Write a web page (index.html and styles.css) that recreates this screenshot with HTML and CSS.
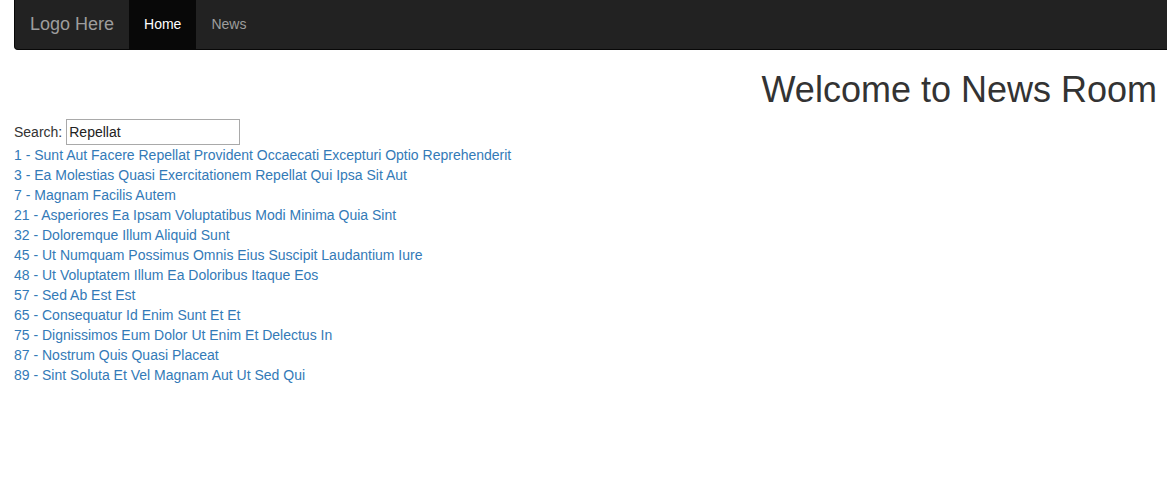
FILE: index.html
```html
<!DOCTYPE html>
<html>
<head>
<meta charset="utf-8">
<link rel="stylesheet" href="styles.css">
</head>
<body>
<div class="page">
  <nav class="navbar">
    <a class="brand" href="#">Logo Here</a>
    <ul class="nav">
      <li class="active"><a href="#">Home</a></li>
      <li><a href="#">News</a></li>
    </ul>
  </nav>
  <h1 class="title">Welcome to News Room</h1>
  <div class="search">
    <label for="q">Search:</label>
    <input id="q" type="text" value="Repellat">
  </div>
  <ul class="results">
    <li><a href="#">1 - Sunt Aut Facere Repellat Provident Occaecati Excepturi Optio Reprehenderit</a></li>
    <li><a href="#">3 - Ea Molestias Quasi Exercitationem Repellat Qui Ipsa Sit Aut</a></li>
    <li><a href="#">7 - Magnam Facilis Autem</a></li>
    <li><a href="#">21 - Asperiores Ea Ipsam Voluptatibus Modi Minima Quia Sint</a></li>
    <li><a href="#">32 - Doloremque Illum Aliquid Sunt</a></li>
    <li><a href="#">45 - Ut Numquam Possimus Omnis Eius Suscipit Laudantium Iure</a></li>
    <li><a href="#">48 - Ut Voluptatem Illum Ea Doloribus Itaque Eos</a></li>
    <li><a href="#">57 - Sed Ab Est Est</a></li>
    <li><a href="#">65 - Consequatur Id Enim Sunt Et Et</a></li>
    <li><a href="#">75 - Dignissimos Eum Dolor Ut Enim Et Delectus In</a></li>
    <li><a href="#">87 - Nostrum Quis Quasi Placeat</a></li>
    <li><a href="#">89 - Sint Soluta Et Vel Magnam Aut Ut Sed Qui</a></li>
  </ul>
</div>
</body>
</html>
```
FILE: styles.css
```css
html, body {
  margin: 0;
  padding: 0;
  overflow: hidden;
  background: #fff;
}
body {
  font-family: "Liberation Sans", Arial, sans-serif;
  font-size: 14px;
  line-height: 20px;
  color: #333;
}
.page {
  padding: 0 10px 0 14px;
}
.navbar {
  display: flex;
  align-items: stretch;
  height: 49px;
  margin-right: -30px;
  background: #222;
  border: 1px solid #080808;
  border-top: none;
  border-radius: 0 0 4px 4px;
  margin-bottom: 20px;
}
.brand {
  display: block;
  padding: 14px 15px 0 15px;
  font-size: 18px;
  line-height: 20px;
  color: #9d9d9d;
  text-decoration: none;
}
.nav {
  display: flex;
  list-style: none;
  margin: 0;
  padding: 0;
}
.nav li a {
  display: block;
  height: 49px;
  box-sizing: border-box;
  padding: 14px 15px 0 15px;
  color: #9d9d9d;
  text-decoration: none;
}
.nav li.active a {
  background: #080808;
  color: #fff;
}
.title {
  margin: 0 0 9px 0;
  text-align: right;
  font-size: 36px;
  font-weight: 500;
  line-height: 40px;
  color: #333;
}
.search {
  display: flex;
  align-items: center;
  height: 26px;
}
.search label {
  margin-right: 4px;
}
.search input {
  width: 174px;
  height: 26px;
  box-sizing: border-box;
  padding: 1px 2px;
  border: 1px solid #a9a9a9;
  font-family: "Liberation Sans", Arial, sans-serif;
  font-size: 14px;
  color: #222;
  margin: 0;
}
.results {
  list-style: none;
  margin: 0;
  padding: 0;
}
.results a {
  color: #337ab7;
  text-decoration: none;
}
```
